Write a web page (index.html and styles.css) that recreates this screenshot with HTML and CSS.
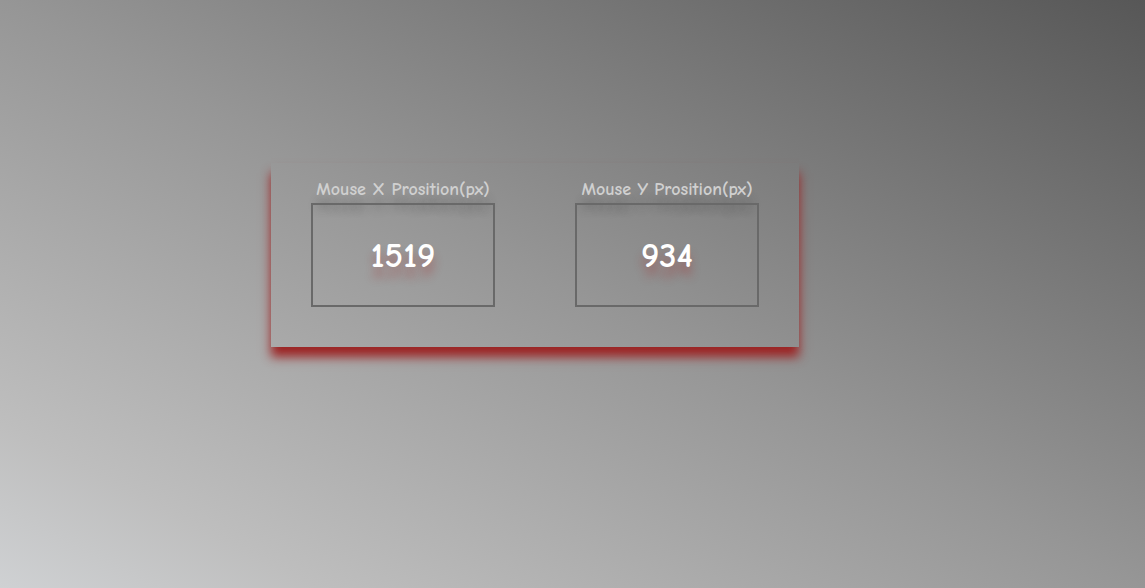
FILE: index.html
```html
<!DOCTYPE html>
<html lang="en">
<head>
<meta charset="utf-8">
<title>Mouse Position</title>
<link rel="stylesheet" href="styles.css">
</head>
<body>
<main class="tracker">
  <section class="axis">
    <h2 class="axis-label" id="label-x">Mouse X Prosition(px)</h2>
    <output class="axis-value" aria-labelledby="label-x">1519</output>
  </section>
  <section class="axis">
    <h2 class="axis-label" id="label-y">Mouse Y Prosition(px)</h2>
    <output class="axis-value" aria-labelledby="label-y">934</output>
  </section>
</main>
</body>
</html>
```

FILE: styles.css
```css
* {
  box-sizing: border-box;
}

body {
  display: flex;
  justify-content: center;
  align-items: flex-start;
  min-height: 100vh;
  margin: 0;
  padding: 163px 75px 40px 0;
  background: linear-gradient(to top right, #cfd1d3 0%, #bebebe 14%, #969696 50%, #575757 100%);
  font-family: "Comic Sans MS", "Comic Neue", "Open Sans", sans-serif;
}

.tracker {
  display: flex;
  flex-wrap: wrap;
  gap: 80px;
  padding: 14px 40px 40px;
  box-shadow: 0 10px 10px #9c2424;
}

.axis {
  display: flex;
  flex-direction: column;
  align-items: center;
}

.axis-label {
  margin: 0;
  color: #d0d0d0;
  font-size: 18px;
  font-weight: 700;
  line-height: 26px;
  white-space: nowrap;
  text-shadow: 0 15px 10px rgba(40, 40, 40, 0.3);
}

.axis-value {
  display: flex;
  justify-content: center;
  align-items: center;
  min-width: 184px;
  min-height: 104px;
  padding-top: 2px;
  border: 2px solid #696969;
  color: #fff;
  font-size: 35px;
  font-weight: 700;
  line-height: 44px;
  text-shadow: 0 10px 10px rgba(165, 42, 42, 0.4);
}
```
